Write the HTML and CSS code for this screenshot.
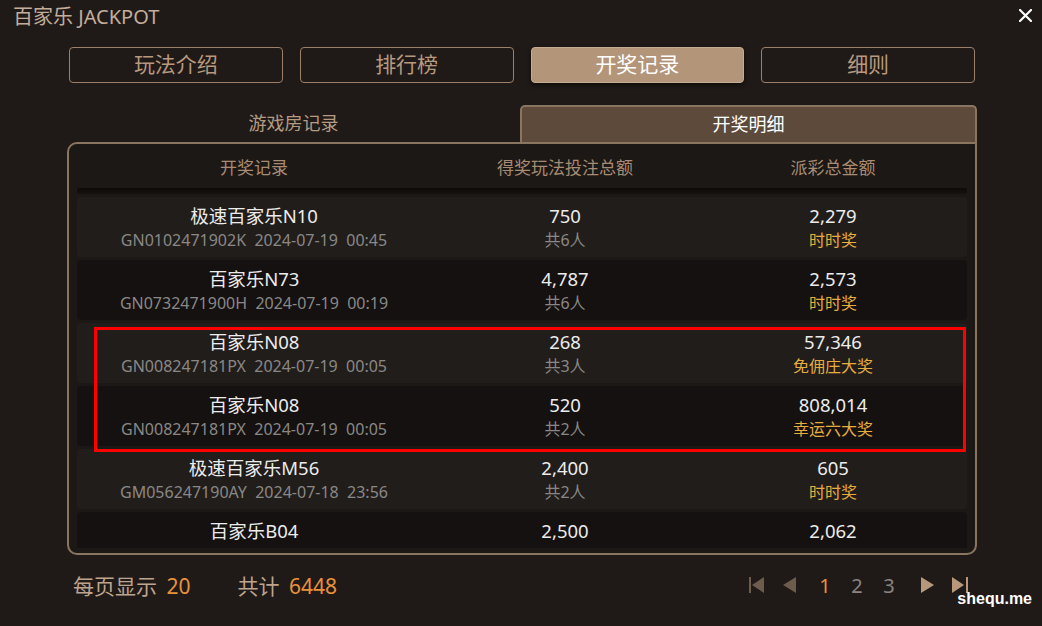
FILE: index.html
```html
<!DOCTYPE html>
<html lang="zh-CN">
<head>
  <meta charset="UTF-8" />
  <meta name="viewport" content="width=device-width, initial-scale=1.0"/>
  <title>百家乐 JACKPOT</title>
  <link rel="stylesheet" href="styles.css">
</head>
<body>

  <div class="window">
    <header class="titlebar">
      <span class="title">百家乐 JACKPOT</span>
      <button class="close" aria-label="close">
        <svg width="13" height="13" viewBox="0 0 13 13">
          <path d="M1 1L12 12M12 1L1 12" stroke="#fff" stroke-width="2.2" stroke-linecap="round"/>
        </svg>
      </button>
    </header>

    <nav class="tabs">
      <button class="tab">玩法介绍</button>
      <button class="tab">排行榜</button>
      <button class="tab active">开奖记录</button>
      <button class="tab">细则</button>
    </nav>

    <div class="subtabs">
      <div class="subtab">游戏房记录</div>
      <div class="subtab active">开奖明细</div>
    </div>

    <section class="panel">
      <div class="thead">
        <span>开奖记录</span>
        <span>得奖玩法投注总额</span>
        <span>派彩总金额</span>
      </div>
      <div class="divider"></div>

      <div class="tbody">
        <div class="row">
          <div class="cell"><div class="main">极速百家乐N10</div><div class="sub">GN0102471902K&nbsp; 2024-07-19&nbsp; 00:45</div></div>
          <div class="cell"><div class="main">750</div><div class="sub">共6人</div></div>
          <div class="cell"><div class="main">2,279</div><div class="sub gold">时时奖</div></div>
        </div>
        <div class="row">
          <div class="cell"><div class="main">百家乐N73</div><div class="sub">GN0732471900H&nbsp; 2024-07-19&nbsp; 00:19</div></div>
          <div class="cell"><div class="main">4,787</div><div class="sub">共6人</div></div>
          <div class="cell"><div class="main">2,573</div><div class="sub gold">时时奖</div></div>
        </div>
        <div class="row">
          <div class="cell"><div class="main">百家乐N08</div><div class="sub">GN008247181PX&nbsp; 2024-07-19&nbsp; 00:05</div></div>
          <div class="cell"><div class="main">268</div><div class="sub">共3人</div></div>
          <div class="cell"><div class="main">57,346</div><div class="sub gold">免佣庄大奖</div></div>
        </div>
        <div class="row">
          <div class="cell"><div class="main">百家乐N08</div><div class="sub">GN008247181PX&nbsp; 2024-07-19&nbsp; 00:05</div></div>
          <div class="cell"><div class="main">520</div><div class="sub">共2人</div></div>
          <div class="cell"><div class="main">808,014</div><div class="sub gold">幸运六大奖</div></div>
        </div>
        <div class="row">
          <div class="cell"><div class="main">极速百家乐M56</div><div class="sub">GM056247190AY&nbsp; 2024-07-18&nbsp; 23:56</div></div>
          <div class="cell"><div class="main">2,400</div><div class="sub">共2人</div></div>
          <div class="cell"><div class="main">605</div><div class="sub gold">时时奖</div></div>
        </div>
        <div class="row">
          <div class="cell"><div class="main">百家乐B04</div></div>
          <div class="cell"><div class="main">2,500</div></div>
          <div class="cell"><div class="main">2,062</div></div>
        </div>

        <!-- highlight around the two big-prize rows -->
        <div class="highlight"></div>
      </div>
    </section>

    <footer class="footer">
      <div class="stats">
        <span>每页显示 <b>20</b></span>
        <span class="total">共计 <b>6448</b></span>
      </div>
      <div class="pager">
        <span class="pg dim">
          <svg width="16" height="18" viewBox="0 0 16 18"><rect x="0" y="1" width="2" height="16" fill="currentColor"/><path d="M3 9L15 1V17Z" fill="currentColor"/></svg>
        </span>
        <span class="pg dim">
          <svg width="16" height="18" viewBox="0 0 16 18"><path d="M2 9L15 1V17Z" fill="currentColor"/></svg>
        </span>
        <span class="pg num current">1</span>
        <span class="pg num">2</span>
        <span class="pg num">3</span>
        <span class="pg lit">
          <svg width="16" height="18" viewBox="0 0 16 18"><path d="M14 9L1 1V17Z" fill="currentColor"/></svg>
        </span>
        <span class="pg lit">
          <svg width="18" height="18" viewBox="0 0 18 18"><path d="M13 9L1 1V17Z" fill="currentColor"/><rect x="15" y="1" width="2" height="16" fill="currentColor"/></svg>
        </span>
      </div>
    </footer>

    <div class="watermark">shequ.me</div>
  </div>

</body>
</html>
```

FILE: styles.css
```css
* {
  box-sizing: border-box;
}

body {
  margin: 0;
  background: #1f1a18;
  color: #e8e8e8;
  font-family: "Noto Sans", "Noto Sans CJK SC", sans-serif;
  overflow: hidden;
}

.window {
  position: relative;
  width: 1042px;
  height: 626px;
  background: #1f1a18;
}

.titlebar {
  height: 35px;
  display: flex;
  align-items: center;
  justify-content: space-between;
  padding: 0 10px 4px 13px;
}

.title {
  font-size: 20px;
  color: #c4ae9b;
}

.close {
  background: none;
  border: none;
  padding: 0;
  width: 13px;
  height: 13px;
  cursor: pointer;
  margin-top: -1px;
}

.close svg {
  display: block;
}

.tabs {
  display: grid;
  grid-template-columns: repeat(4, 1fr);
  gap: 17px;
  margin: 12px 67px 0 69px;
}

.tab {
  height: 36px;
  border: 1.5px solid #9d806a;
  border-radius: 4px;
  background: transparent;
  color: #b8997e;
  font-family: inherit;
  font-size: 21px;
  line-height: 1;
  padding: 0 0 2px;
  cursor: pointer;
}

.tab.active {
  background: #b3957a;
  border-color: #c7ab90;
  color: #fff;
  box-shadow: 0 2px 5px rgba(0, 0, 0, 0.6);
}

.subtabs {
  display: flex;
  height: 37px;
  margin: 22px 65px 0 67px;
}

.subtab {
  flex: 1;
  display: flex;
  align-items: center;
  justify-content: center;
  padding-bottom: 3px;
  font-size: 18px;
  color: #b59a82;
}

.subtab.active {
  background: #5d4a3b;
  border: 2px solid #8a7660;
  border-bottom: none;
  border-radius: 5px 5px 0 0;
  color: #fff;
}

.panel {
  height: 413px;
  margin: 0 65px 0 67px;
  border: 2px solid #8a7660;
  border-radius: 10px 0 10px 10px;
  background: #1c1816;
  padding: 0 8px 5px;
}

.thead,
.row {
  display: grid;
  grid-template-columns: 354px 268px 268px;
  text-align: center;
}

.thead {
  height: 44px;
  align-items: center;
  font-size: 17px;
  color: #a88b72;
}

.divider {
  height: 6px;
  margin-bottom: 3px;
  background: linear-gradient(#0d0a09, #171210);
  border-radius: 2px;
}

.tbody {
  position: relative;
  height: 351px;
  overflow: hidden;
  display: flex;
  flex-direction: column;
  gap: 3px;
}

.row {
  flex: none;
  height: 60px;
  padding-top: 7px;
  border-radius: 4px;
  background: #211d1b;
}

.row:nth-child(even) {
  background: #141110;
}

.main {
  font-size: 18.5px;
  line-height: 24px;
  color: #ececec;
}

.sub {
  font-size: 16px;
  line-height: 24px;
  color: #8a8886;
}

.sub.gold {
  color: #e6ad3f;
}

.highlight {
  position: absolute;
  left: 17px;
  top: 130px;
  width: 872px;
  height: 125px;
  border: 3px solid #f00;
  pointer-events: none;
}

.footer {
  height: 60px;
  display: flex;
  align-items: center;
  justify-content: space-between;
  padding: 0 66px 0 73px;
}

.stats {
  display: flex;
  gap: 47px;
  font-size: 21px;
  color: #bda48e;
}

.stats b {
  font-weight: normal;
  color: #e8923b;
  margin-left: 4px;
}

.pager {
  display: flex;
  align-items: center;
}

.pg {
  width: 32px;
  height: 32px;
  display: flex;
  align-items: center;
  justify-content: center;
}

.pg svg {
  display: block;
}

.pg.dim {
  color: #6d5b4c;
}

.pg.lit {
  color: #b8987b;
}

.pg.num {
  font-size: 20px;
  color: #8a8480;
}

.pg.num.current {
  color: #e8923b;
  margin-left: 4px;
}

.pg.num + .lit {
  margin-left: 7px;
}

.watermark {
  position: absolute;
  right: 10px;
  bottom: 18px;
  font-family: "Liberation Sans", sans-serif;
  font-weight: bold;
  font-size: 16px;
  color: #fff;
}
```
